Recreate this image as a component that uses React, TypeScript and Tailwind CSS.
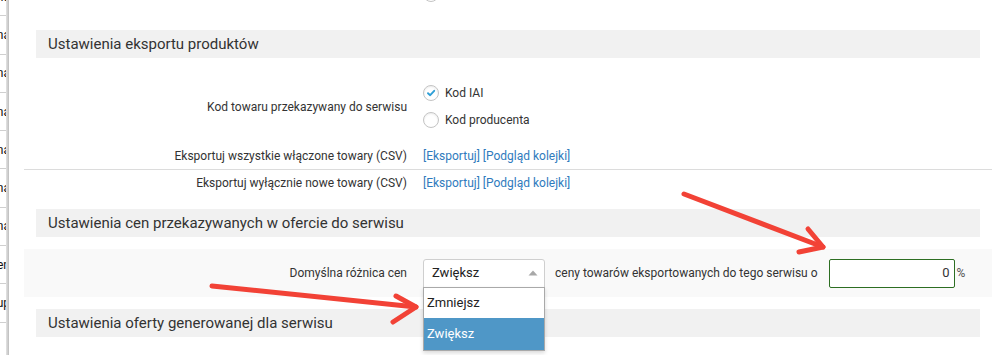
import React from "react";

const sideItems = ["Strona główna", "Oferta specjalna", "Obsługa ręczna", "Kolumna", "Promocja roczna", "Wysyłka płatna", "Cena bazowa sklepu stacjonarna", "Ustawienia języka: en", "Grupa kup"];

function Radio({ checked = false }: { checked?: boolean }) {
  return (
    <span className="flex h-[16px] w-[16px] items-center justify-center rounded-full border border-[#c4c4c4] bg-white shadow-[inset_0_1px_2px_rgba(0,0,0,0.08)]">
      {checked && (
        <svg width="10" height="10" viewBox="0 0 10 10">
          <path d="M2 5.2 L4.2 7.2 L8.2 2.8" fill="none" stroke="#2f9fd6" strokeWidth="1.9" strokeLinecap="round" strokeLinejoin="round" />
        </svg>
      )}
    </span>
  );
}

function SectionHeader({ title }: { title: string }) {
  return (
    <div className="mx-3 flex h-[28px] items-center bg-[#f1f1f1] px-3 text-[15px] text-[#333]">{title}</div>
  );
}

function Row({ label, children, className = "" }: { label: string; children: React.ReactNode; className?: string }) {
  return (
    <div className={`flex items-center ${className}`}>
      <div className="w-[383px] shrink-0 text-right text-[12px] text-[#333]">{label}</div>
      <div className="ml-4 flex items-center text-[12px]">{children}</div>
    </div>
  );
}

function Links() {
  return <span className="text-[#2f7bbd]">[Eksportuj] [Podgląd kolejki]</span>;
}

export default function App() {
  return (
    <div className="relative flex h-[355px] w-[1002px] overflow-hidden bg-white font-['Roboto',sans-serif]">
      {/* left menu strip, mostly scrolled away */}
      <div className="relative w-[9px] shrink-0 overflow-hidden bg-white">
        <div className="-mt-[22px] flex flex-col">
          {sideItems.map((item) => (
            <div key={item} className="flex h-[38.3px] items-center justify-end border-b border-[#cfcfcf] whitespace-nowrap text-[12px] text-[#111]">
              <span className="-mr-[1px]">{item}</span>
            </div>
          ))}
        </div>
        <div className="absolute inset-y-0 right-0 w-[3px] bg-gradient-to-r from-[#e4e4e4] to-[#bdbdbd]" />
      </div>

      <div className="ml-[15px] w-[968px] shrink-0">
        <div className="-mt-[14px] flex h-[44px] items-start pl-[399px]">
          <Radio />
        </div>

        <SectionHeader title="Ustawienia eksportu produktów" />

        <Row label="Kod towaru przekazywany do serwisu" className="mt-[26px]">
          <div className="flex flex-col gap-[9px]">
            <label className="flex items-center gap-[6px] text-[12px] text-[#333]">
              <Radio checked />
              Kod IAI
            </label>
            <label className="flex items-center gap-[6px] text-[12px] text-[#333]">
              <Radio />
              Kod producenta
            </label>
          </div>
        </Row>

        <Row label="Eksportuj wszystkie włączone towary (CSV)" className="mt-[17px] h-[19px]">
          <Links />
        </Row>
        <div className="mt-[4px] border-t border-[#dcdcdc]" />
        <Row label="Eksportuj wyłącznie nowe towary (CSV)" className="mt-[3px] h-[19px]">
          <Links />
        </Row>

        <div className="mt-[17px]">
          <SectionHeader title="Ustawienia cen przekazywanych w ofercie do serwisu" />
        </div>

        <div className="mt-[12px] flex h-[48px] items-center bg-[#f9f9f9]">
          <div className="w-[383px] shrink-0 text-right text-[12px] text-[#333]">Domyślna różnica cen</div>
          <div className="relative ml-4 flex h-[29px] w-[122px] items-center justify-between rounded-t-[3px] border border-[#cfcfcf] bg-white pl-[8px] pr-[6px] text-[13px] text-[#222]">
            <span>Zwiększ</span>
            <svg width="10" height="6" viewBox="0 0 10 6">
              <path d="M0.5 5.5 L5 0.5 L9.5 5.5 Z" fill="#a8a8a8" />
            </svg>
            <div className="absolute left-[-1px] top-[27px] z-10 w-[122px] border border-[#a9a9a9] bg-white shadow-[0_2px_4px_rgba(0,0,0,0.15)]">
              <div className="flex h-[30px] items-center px-[3px] text-[13px] text-[#222]">Zmniejsz</div>
              <div className="flex h-[32px] items-center bg-[#4f97c7] px-[3px] text-[13px] text-white">Zwiększ</div>
            </div>
          </div>
          <span className="ml-[10px] text-[12px] text-[#333]">ceny towarów eksportowanych do tego serwisu o</span>
          <div className="ml-[11px] flex h-[29px] w-[126px] items-center justify-end rounded-[2px] border border-[#2d6e22] bg-white pr-[4px] text-[13px] text-[#333]">
            0
          </div>
          <span className="ml-[2px] text-[12px] text-[#555]">%</span>
        </div>

        <div className="mt-[12px]">
          <SectionHeader title="Ustawienia oferty generowanej dla serwisu" />
        </div>
      </div>

      {/* annotation arrows */}
      <svg className="pointer-events-none absolute inset-0 z-20" width="1002" height="355" viewBox="0 0 1002 355">
        <g fill="none" stroke="#f24236" strokeWidth="5" strokeLinecap="round" strokeLinejoin="round">
          <path d="M684 194 L823 247" />
          <path d="M808 229 L823 247 L799 252" />
          <path d="M212 286 L416 307" />
          <path d="M396 296 L416 307 L393 322" />
        </g>
      </svg>
    </div>
  );
}
